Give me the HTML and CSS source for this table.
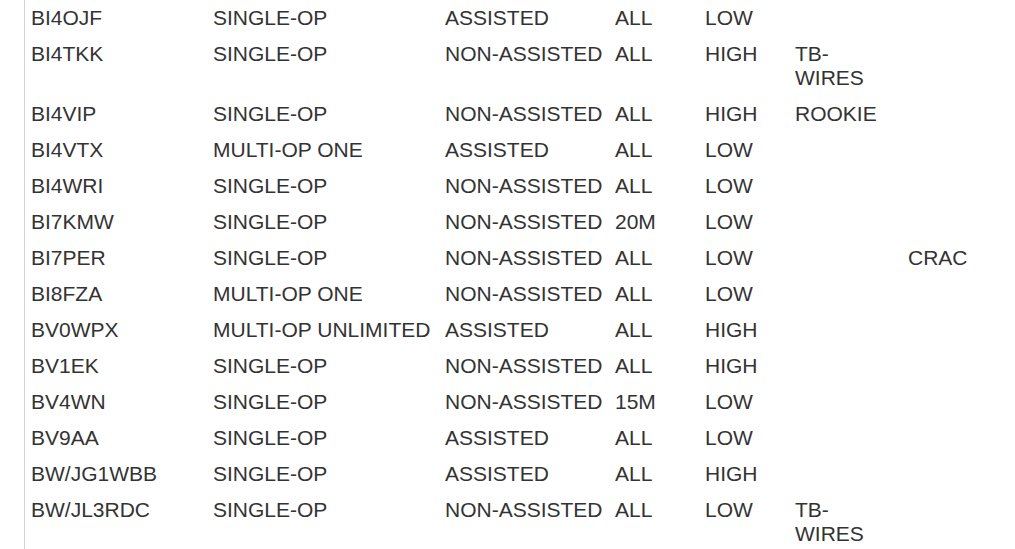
FILE: index.html
```html
<!DOCTYPE html>
<html>
<head>
<meta charset="utf-8">
<link rel="stylesheet" href="styles.css">
</head>
<body>
<div class="wrap">
<table class="log">
<colgroup>
<col class="c1"><col class="c2"><col class="c3"><col class="c4"><col class="c5"><col class="c6"><col class="c7">
</colgroup>
<tbody>
<tr><td>BI4OJF</td><td>SINGLE-OP</td><td>ASSISTED</td><td>ALL</td><td>LOW</td><td class="tag"></td><td></td></tr>
<tr><td>BI4TKK</td><td>SINGLE-OP</td><td>NON-ASSISTED</td><td>ALL</td><td>HIGH</td><td class="tag">TB-WIRES</td><td></td></tr>
<tr><td>BI4VIP</td><td>SINGLE-OP</td><td>NON-ASSISTED</td><td>ALL</td><td>HIGH</td><td class="tag">ROOKIE</td><td></td></tr>
<tr><td>BI4VTX</td><td>MULTI-OP ONE</td><td>ASSISTED</td><td>ALL</td><td>LOW</td><td class="tag"></td><td></td></tr>
<tr><td>BI4WRI</td><td>SINGLE-OP</td><td>NON-ASSISTED</td><td>ALL</td><td>LOW</td><td class="tag"></td><td></td></tr>
<tr><td>BI7KMW</td><td>SINGLE-OP</td><td>NON-ASSISTED</td><td>20M</td><td>LOW</td><td class="tag"></td><td></td></tr>
<tr><td>BI7PER</td><td>SINGLE-OP</td><td>NON-ASSISTED</td><td>ALL</td><td>LOW</td><td class="tag"></td><td>CRAC</td></tr>
<tr><td>BI8FZA</td><td>MULTI-OP ONE</td><td>NON-ASSISTED</td><td>ALL</td><td>LOW</td><td class="tag"></td><td></td></tr>
<tr><td>BV0WPX</td><td>MULTI-OP UNLIMITED</td><td>ASSISTED</td><td>ALL</td><td>HIGH</td><td class="tag"></td><td></td></tr>
<tr><td>BV1EK</td><td>SINGLE-OP</td><td>NON-ASSISTED</td><td>ALL</td><td>HIGH</td><td class="tag"></td><td></td></tr>
<tr><td>BV4WN</td><td>SINGLE-OP</td><td>NON-ASSISTED</td><td>15M</td><td>LOW</td><td class="tag"></td><td></td></tr>
<tr><td>BV9AA</td><td>SINGLE-OP</td><td>ASSISTED</td><td>ALL</td><td>LOW</td><td class="tag"></td><td></td></tr>
<tr><td>BW/JG1WBB</td><td>SINGLE-OP</td><td>ASSISTED</td><td>ALL</td><td>HIGH</td><td class="tag"></td><td></td></tr>
<tr><td>BW/JL3RDC</td><td>SINGLE-OP</td><td>NON-ASSISTED</td><td>ALL</td><td>LOW</td><td class="tag">TB-WIRES</td><td></td></tr>
</tbody>
</table>
</div>
</body>
</html>
```
FILE: styles.css
```css
html, body {
  margin: 0;
  padding: 0;
  background: #fff;
}
body {
  font-family: "Liberation Sans", Arial, sans-serif;
  color: #333;
  overflow: hidden;
}
.wrap {
  margin-left: 24px;
  border-left: 1px solid #d0d4d4;
  min-height: 549px;
}
.log {
  border-collapse: collapse;
  table-layout: fixed;
  width: 980px;
  font-size: 21px;
  line-height: 24px;
}
.log td {
  padding: 6px 8px 6px 6px;
  vertical-align: top;
  text-align: left;
  white-space: nowrap;
}
.log td.tag {
  white-space: normal;
}
.c1 { width: 182px; }
.c2 { width: 232px; }
.c3 { width: 170px; }
.c4 { width: 90px; }
.c5 { width: 90px; }
.c6 { width: 113px; }
.c7 { width: 103px; }
```
